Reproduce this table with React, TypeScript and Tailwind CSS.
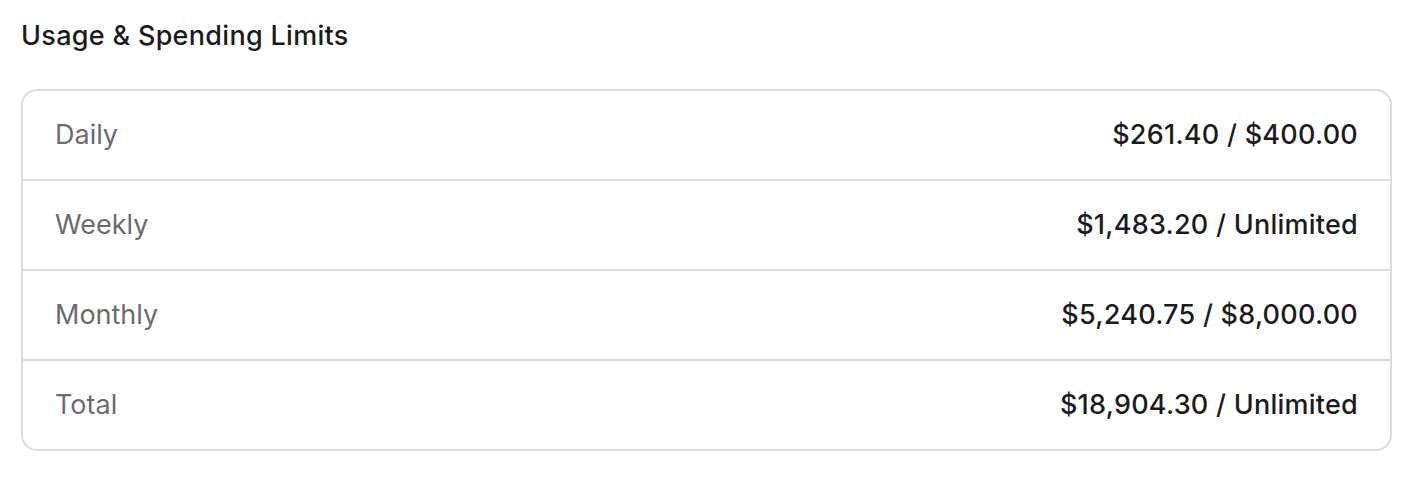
export default function App() {
  const rows = [
    { label: "Daily", value: "$261.40 / $400.00" },
    { label: "Weekly", value: "$1,483.20 / Unlimited" },
    { label: "Monthly", value: "$5,240.75 / $8,000.00" },
    { label: "Total", value: "$18,904.30 / Unlimited" },
  ];

  return (
    <div className="min-h-[480px] bg-white pl-[21px] pr-[23px] pt-[19px] font-['Inter',sans-serif]">
      <h2 className="text-[27px] leading-[34px] font-medium tracking-[0.3px] text-[#1c1c1e]">Usage &amp; Spending Limits</h2>
      <div className="mt-[36px] rounded-[16px] border-2 border-[#dcdce0]">
        {rows.map((row, i) => (
          <div
            key={row.label}
            className={`flex items-center justify-between px-[32px] ${i > 0 ? "h-[90px] border-t-2 border-[#dcdce0]" : "h-[88px]"}`}
          >
            <span className="text-[27px] text-[#6b6b70]">{row.label}</span>
            <span className="text-[27px] font-[480] tracking-[0.25px] text-[#1c1c1e]">{row.value}</span>
          </div>
        ))}
      </div>
    </div>
  );
}
